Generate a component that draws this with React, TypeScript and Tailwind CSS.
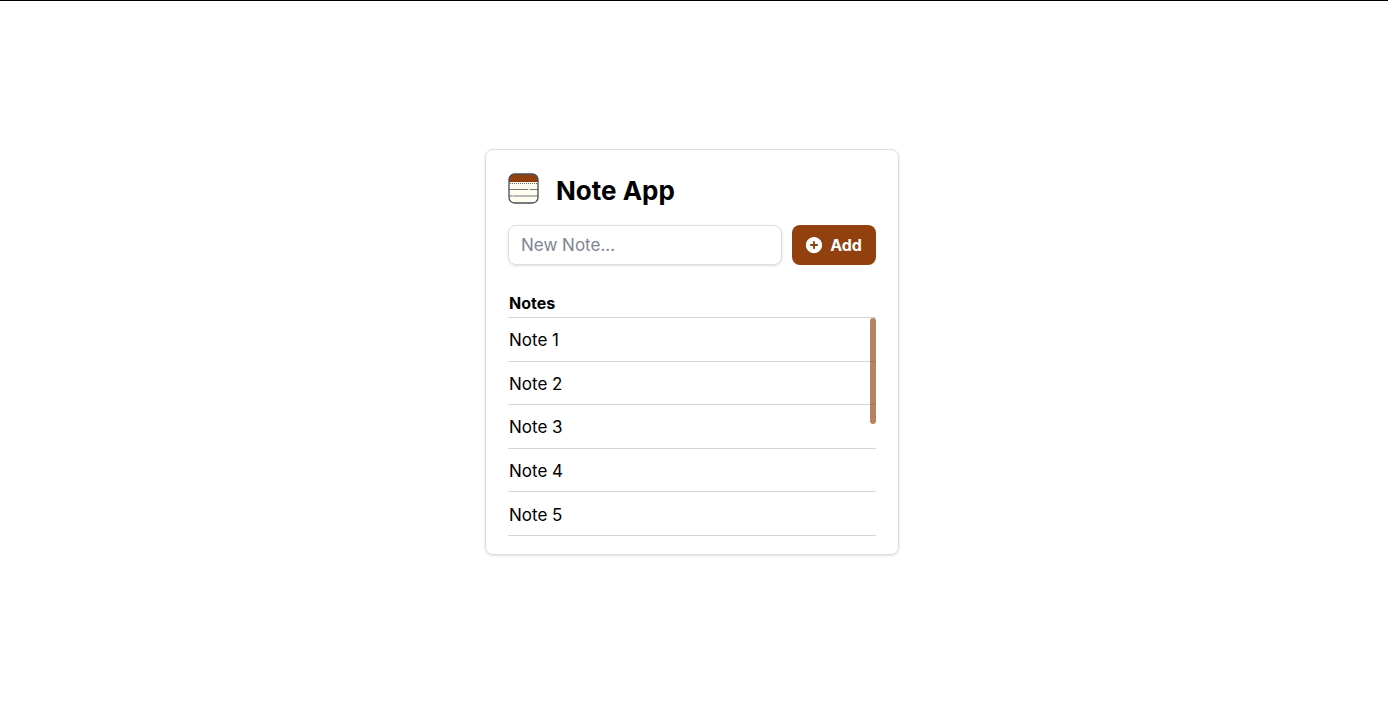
import { useState } from "react";
import type { FormEvent } from "react";

const initialNotes = ["Note 1", "Note 2", "Note 3", "Note 4", "Note 5"];

function NotepadIcon() {
  return (
    <svg viewBox="0 0 31 31" className="size-[31px] shrink-0" aria-hidden="true">
      <rect x="1" y="1" width="29" height="29" rx="5.5" fill="#fffdf0" />
      <path d="M1 9V6.500A5.500 5.500 0 0 1 6.500 1h18A5.500 5.500 0 0 1 30 6.500V9Z" fill="#92400e" />
      <path d="M2 10.500h27" stroke="#6b6b66" strokeWidth="1" strokeDasharray="1 1" />
      <path d="M1 16.500h29" stroke="#77777b" strokeWidth="1" />
      <path d="M1 23h29" stroke="#b9b9b4" strokeWidth="2" />
      <path d="M20 16.500h2M4 23h2" stroke="#dedfd9" strokeWidth="1" />
      <rect x="1" y="1" width="29" height="29" rx="5.5" fill="none" stroke="#484c54" strokeWidth="1.300" />
    </svg>
  );
}

function PlusCircleIcon() {
  return (
    <svg viewBox="0 0 24 24" className="size-5 shrink-0" fill="currentColor" aria-hidden="true">
      <path
        fillRule="evenodd"
        clipRule="evenodd"
        d="M12 2.250c-5.385 0-9.750 4.365-9.750 9.750s4.365 9.750 9.750 9.750 9.750-4.365 9.750-9.750S17.385 2.250 12 2.250ZM13.100 8.250a1.100 1.100 0 0 0-2.200 0v2.650H8.250a1.100 1.100 0 0 0 0 2.200h2.650v2.650a1.100 1.100 0 0 0 2.200 0v-2.650h2.650a1.100 1.100 0 0 0 0-2.200h-2.650V8.250Z"
      />
    </svg>
  );
}

export default function App() {
  const [notes, setNotes] = useState(initialNotes);
  const [draft, setDraft] = useState("");

  function addNote(event: FormEvent) {
    event.preventDefault();
    const text = draft.trim();
    if (!text) return;
    setNotes([...notes, text]);
    setDraft("");
  }

  return (
    <main className="flex min-h-screen items-center justify-center border-t border-black bg-white pr-1 pb-0.5 font-['Inter',sans-serif] text-[17px] leading-6 text-black">
      <section className="w-full max-w-[414px] rounded-lg border border-[#dcdde0] px-[22px] pt-[23px] pb-[18px] shadow-sm">
        <header className="flex items-start gap-[17px]">
          <NotepadIcon />
          <h1 className="text-[26px] leading-9 font-bold">Note App</h1>
        </header>

        <form onSubmit={addNote} className="mt-4 flex gap-2.5">
          <input
            type="text"
            aria-label="New note"
            placeholder="New Note..."
            value={draft}
            onChange={(event) => setDraft(event.target.value)}
            className="h-10 min-w-0 flex-1 rounded-lg border border-[#dcdde0] px-3 shadow-sm outline-none placeholder:text-[#7f8592]"
          />
          <button
            type="submit"
            className="flex h-10 w-[84px] items-center justify-center gap-1.5 rounded-lg bg-[#92400e] pr-0.5 text-base font-bold text-white"
          >
            <PlusCircleIcon />
            Add
          </button>
        </form>

        <h2 className="mt-[26px] border-b border-gray-300 pb-0.5 pl-px text-base leading-6 font-bold">Notes</h2>
        <div className="relative">
          <ul className="grid h-[218px] auto-rows-[20%] overflow-hidden">
            {notes.map((note, index) => (
              <li key={index} className="flex items-center border-b border-gray-300 pt-0.5 pl-px">
                {note}
              </li>
            ))}
          </ul>
          <div className="absolute top-0 right-0 h-[106px] w-1.5 rounded-full bg-[#92400e]/65" />
        </div>
      </section>
    </main>
  );
}
